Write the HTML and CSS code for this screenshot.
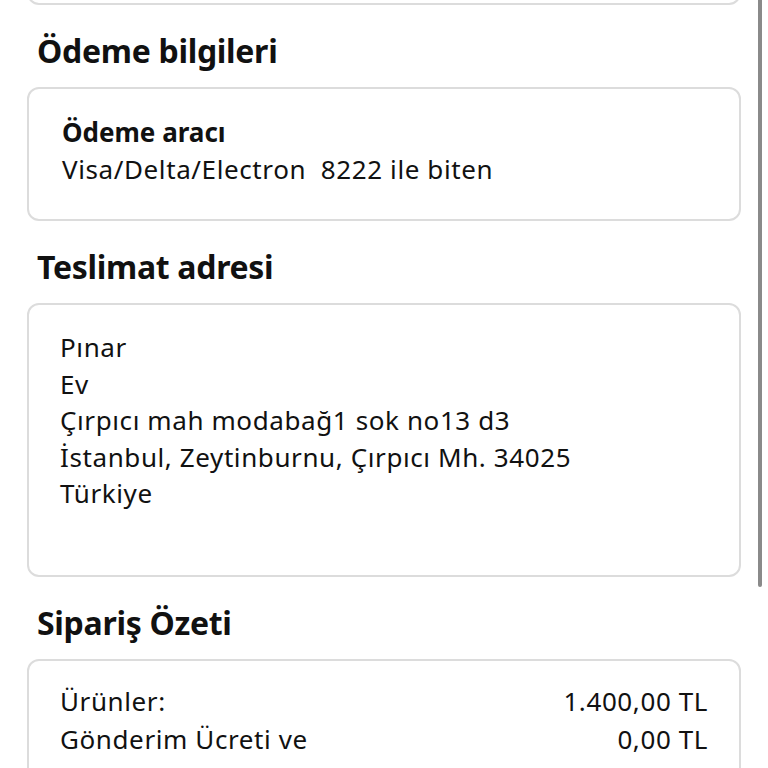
FILE: index.html
```html
<!DOCTYPE html>
<html lang="tr">
<head>
<meta charset="utf-8">
<link rel="stylesheet" href="styles.css">
</head>
<body>
<div class="page">
  <div class="card card-top"></div>

  <h2 class="section-title">Ödeme bilgileri</h2>
  <div class="card card-pay">
    <div class="label">Ödeme aracı</div>
    <div class="line">Visa/Delta/Electron&nbsp; 8222 ile biten</div>
  </div>

  <h2 class="section-title">Teslimat adresi</h2>
  <div class="card card-addr">
    <div class="addr">Pınar</div>
    <div class="addr">Ev</div>
    <div class="addr">Çırpıcı mah modabağ1 sok no13 d3</div>
    <div class="addr">İstanbul, Zeytinburnu, Çırpıcı Mh. 34025</div>
    <div class="addr">Türkiye</div>
  </div>

  <h2 class="section-title">Sipariş Özeti</h2>
  <div class="card card-sum">
    <div class="row"><span class="key">Ürünler:</span><span class="val">1.400,00 TL</span></div>
    <div class="row"><span class="key">Gönderim Ücreti ve<br>Paketleme:</span><span class="val">0,00 TL</span></div>
  </div>
</div>
<div class="scrollbar"></div>
</body>
</html>
```

FILE: styles.css
```css
html, body {
  margin: 0;
  padding: 0;
  background: #ffffff;
  height: 768px;
  overflow: hidden;
}

body {
  font-family: "Noto Sans", "Open Sans", sans-serif;
  color: #111111;
  position: relative;
}

.page {
  padding: 0 27px;
}

.card {
  border: 2px solid #dcdcdc;
  border-radius: 12px;
  background: #fff;
}

.card-top {
  height: 60px;
  margin-top: -55px;
  box-sizing: border-box;
}

.section-title {
  margin: 0;
  padding: 26px 0 16px 10px;
  font-size: 32px;
  line-height: 40px;
  font-weight: 700;
  letter-spacing: -0.3px;
}

.card-pay {
  padding: 25px 31px 31px 33px;
  font-size: 26px;
  line-height: 37px;
}

.label {
  font-weight: 700;
}

.line,
.addr,
.key,
.val {
  letter-spacing: 0.6px;
}

.card-addr {
  padding: 24px 31px 63px 31px;
  font-size: 26px;
  line-height: 36.5px;
}

.card-sum {
  padding: 21px 31px 0 31px;
  font-size: 26px;
  line-height: 38px;
}

.row {
  display: flex;
  justify-content: space-between;
  align-items: flex-start;
}

.scrollbar {
  position: absolute;
  top: 0;
  left: 758px;
  width: 4px;
  height: 587px;
  background: #8a8a8a;
  border-radius: 0 0 2px 2px;
}
```
